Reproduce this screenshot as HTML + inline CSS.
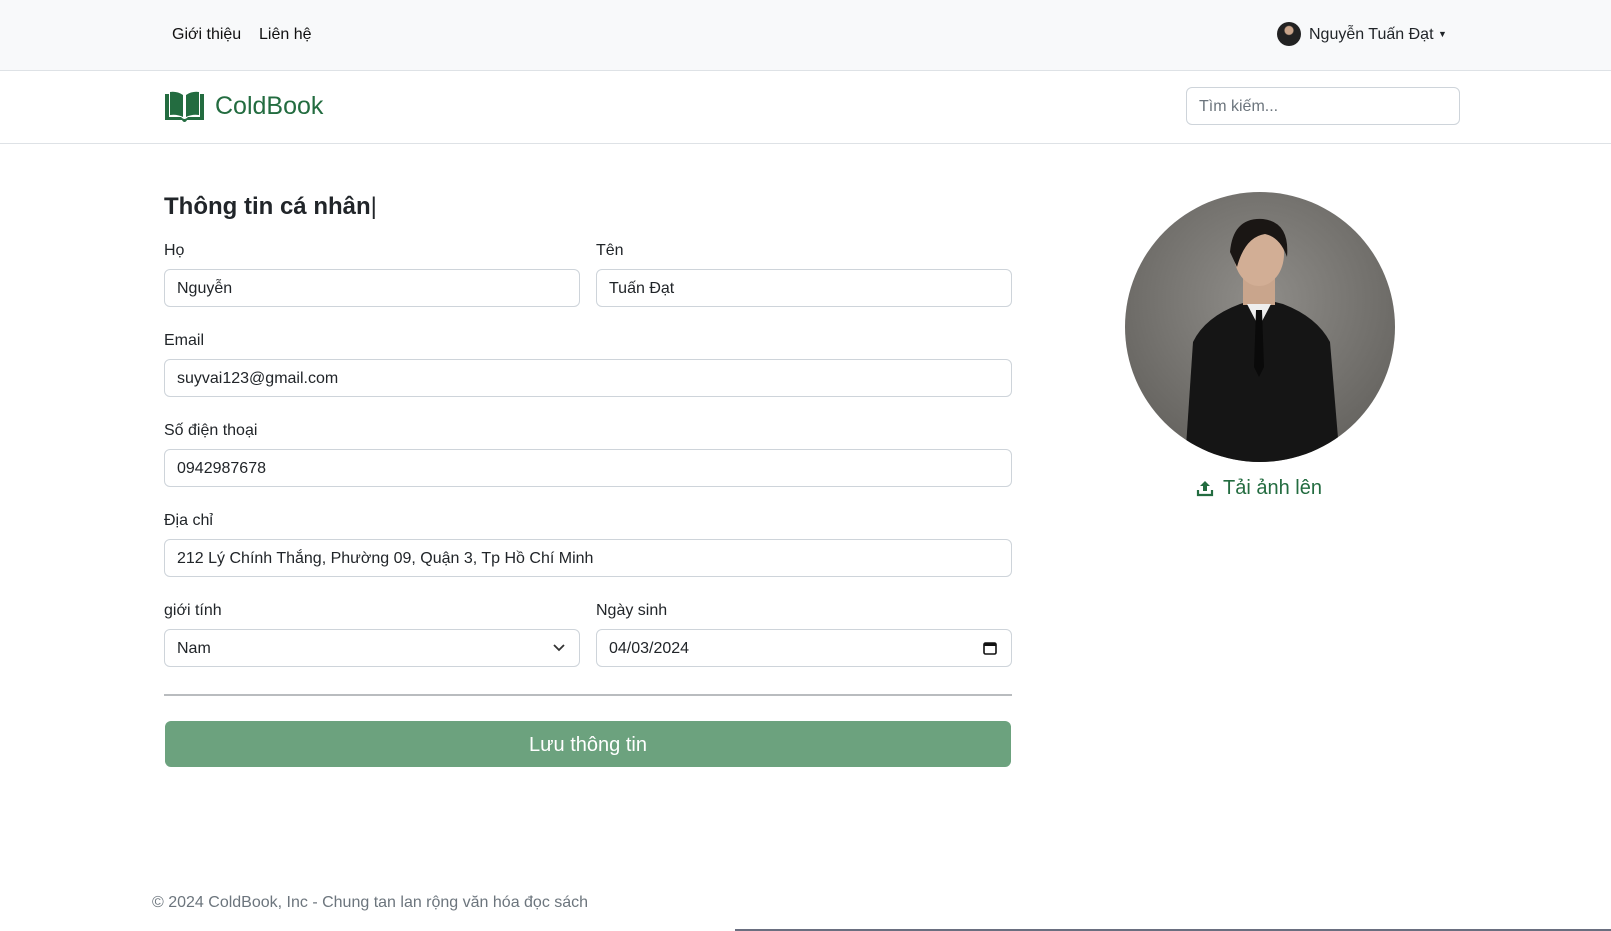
<!DOCTYPE html>
<html><head><meta charset="utf-8"><style>
*{box-sizing:border-box;margin:0;padding:0}
body{width:1611px;height:931px;overflow:hidden;background:#fff;font-family:"Liberation Sans","DejaVu Sans",sans-serif;color:#212529;position:relative;font-size:16px}
.top{position:absolute;left:0;top:0;width:1611px;height:71px;background:#f8f9fa;border-bottom:1px solid #dee2e6}
.top a{position:absolute;top:26px;font-size:16px;color:#111}
.hdr{position:absolute;left:0;top:71px;width:1611px;height:73px;border-bottom:1px solid #dee2e6}
.abs{position:absolute}
.lbl{position:absolute;font-size:16px;color:#212529;margin-top:2px}
.inp{position:absolute;height:38px;border:1px solid #ced4da;border-radius:6px;padding:1px 12px 0;line-height:36px;font-size:16px;color:#212529}
</style></head><body>
<div class="top">
<a style="left:172px">Giới thiệu</a><a style="left:259px">Liên hệ</a>
<div class="abs" style="left:1277px;top:22px;width:24px;height:24px;border-radius:50%;background:radial-gradient(circle at 50% 35%,#c9a48a 0 4px,#222 5px 100%)"></div>
<div class="abs" style="left:1309px;top:26px;font-size:16px">Nguyễn Tuấn Đạt <span style="font-size:9px;vertical-align:2px">▼</span></div>
</div>
<div class="hdr">
<svg class="abs" style="left:164px;top:20px" width="41" height="32" viewBox="0 0 41 32"><path d="M1 3 L1 29 L18 29 Q19 31 20.5 31 Q22 31 23 29 L40 29 L40 3 L36 3 L36 26 L24 26 Q22 28 20.5 28 Q19 28 17 26 L5 26 L5 3 Z" fill="#236c40"/><path d="M6 1 Q13 0 19 4 L19 26 Q13 23 6 24 Z M35 1 Q28 0 22 4 L22 26 Q28 23 35 24 Z" fill="#236c40"/></svg>
<div class="abs" style="left:215px;top:21px;font-size:25px;color:#236c40">ColdBook</div>
<div class="inp" style="left:1186px;top:16px;width:274px;height:38px;color:#6c757d">Tìm kiếm...</div>
</div>
<div class="abs" style="left:164px;top:193px;font-size:24px;font-weight:bold">Thông tin cá nhân<span style="font-weight:normal">|</span></div>
<div class="lbl" style="left:164px;top:240px">Họ</div>
<div class="lbl" style="left:596px;top:240px">Tên</div>
<div class="inp" style="left:164px;top:269px;width:416px">Nguyễn</div>
<div class="inp" style="left:596px;top:269px;width:416px">Tuấn Đạt</div>
<div class="lbl" style="left:164px;top:330px">Email</div>
<div class="inp" style="left:164px;top:359px;width:848px">suyvai123@gmail.com</div>
<div class="lbl" style="left:164px;top:420px">Số điện thoại</div>
<div class="inp" style="left:164px;top:449px;width:848px">0942987678</div>
<div class="lbl" style="left:164px;top:510px">Địa chỉ</div>
<div class="inp" style="left:164px;top:539px;width:848px">212 Lý Chính Thắng, Phường 09, Quận 3, Tp Hồ Chí Minh</div>
<div class="lbl" style="left:164px;top:600px">giới tính</div>
<div class="lbl" style="left:596px;top:600px">Ngày sinh</div>
<div class="inp" style="left:164px;top:629px;width:416px">Nam<svg class="abs" style="right:14px;top:13px" width="12" height="10" viewBox="0 0 12 10"><path d="M1 2 L6 7 L11 2" stroke="#333" stroke-width="1.8" fill="none"/></svg></div>
<div class="inp" style="left:596px;top:629px;width:416px">04/03/2024<svg class="abs" style="right:14px;top:11px" width="14" height="14" viewBox="0 0 14 14"><rect x="1" y="2" width="12" height="11" rx="1.5" stroke="#111" stroke-width="1.6" fill="none"/><rect x="1" y="2" width="12" height="3" fill="#111"/></svg></div>
<div class="abs" style="left:164px;top:694px;width:848px;height:2px;background:#b9bcbf"></div>
<div class="abs" style="left:165px;top:721px;width:846px;height:46px;background:#6ca27e;border-radius:6px;color:#fff;font-size:20px;text-align:center;line-height:48px">Lưu thông tin</div>
<div class="abs" style="left:1125px;top:192px;width:270px;height:270px;border-radius:50%;overflow:hidden;background:radial-gradient(circle at 50% 40%,#8f8d89,#6a6864 70%,#5a5855)">
<svg width="270" height="270" viewBox="0 0 270 270"><path d="M60 270 L68 150 Q80 125 115 112 L128 108 L142 108 L158 112 Q192 125 205 150 L215 270 Z" fill="#151515"/><rect x="118" y="78" width="32" height="35" fill="#c9a58c"/><ellipse cx="134" cy="62" rx="25" ry="32" fill="#d2ae95"/><path d="M105 60 Q108 25 138 27 Q165 30 162 65 Q155 45 140 42 Q120 45 112 75 Z" fill="#1a1614"/><path d="M122 112 L134 135 L146 112 Z" fill="#eee"/><path d="M131 118 L137 118 L139 175 L134 185 L129 175 Z" fill="#0a0a0a"/></svg>
</div>
<svg class="abs" style="left:1196px;top:479px" width="18" height="18" viewBox="0 0 18 18"><path d="M9 2 L4 7 L7 7 L7 12 L11 12 L11 7 L14 7 Z" fill="#236c40"/><path d="M2 11 L2 16 L16 16 L16 11" stroke="#236c40" stroke-width="2.2" fill="none"/></svg>
<div class="abs" style="left:1223px;top:477px;font-size:20px;color:#236c40">Tải ảnh lên</div>
<div class="abs" style="left:152px;top:894px;font-size:16px;color:#6c757d">© 2024 ColdBook, Inc - Chung tan lan rộng văn hóa đọc sách</div>
<div class="abs" style="left:735px;top:929px;width:876px;height:2px;background:#6a6f80"></div>
</body></html>
